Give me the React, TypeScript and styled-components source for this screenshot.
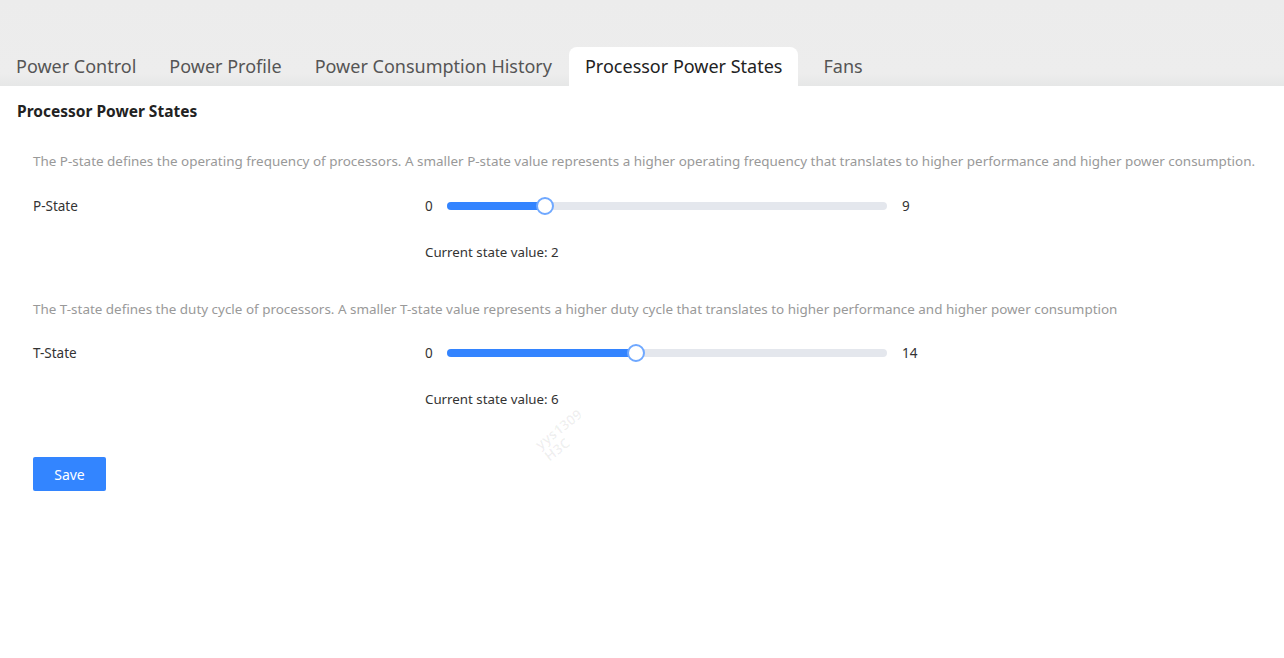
import styled, { createGlobalStyle } from 'styled-components';

const GlobalStyle = createGlobalStyle`
  html, body {
    margin: 0;
    padding: 0;
    background: #fff;
    font-family: "Noto Sans", "Liberation Sans", sans-serif;
  }
`;

const Page = styled.div`
  position: relative;
  width: 1284px;
  min-height: 658px;
  background: #fff;
`;

const TabBar = styled.div`
  height: 86px;
  display: flex;
  align-items: flex-end;
  background: linear-gradient(to bottom, #ececec 0%, #ededed 85%, #e6e7e7 100%);
`;

const Tab = styled.div<{ $active?: boolean }>`
  height: 39px;
  padding: 0 16px 1px 16px;
  display: flex;
  align-items: center;
  box-sizing: border-box;
  font-size: 18px;
  color: ${(p) => (p.$active ? '#222' : '#555')};
  background: ${(p) => (p.$active ? '#fff' : 'transparent')};
  border-radius: 8px 8px 0 0;
  margin-right: ${(p) => (p.$active ? '9px' : '1px')};
`;

const Content = styled.div`
  padding: 13px 0 0 17px;
`;

const Title = styled.h2`
  margin: 0;
  font-size: 15.5px;
  font-weight: 700;
  color: #222;
  line-height: 24px;
`;

const Section = styled.div`
  padding-left: 16px;
`;

const Description = styled.p<{ $top: number }>`
  margin: ${(p) => p.$top}px 0 0;
  font-size: 13.45px;
  color: #999;
  line-height: 20px;
  white-space: nowrap;
`;

const Row = styled.div<{ $top: number }>`
  display: flex;
  align-items: center;
  height: 20px;
  margin-top: ${(p) => p.$top}px;
  font-size: 13.5px;
  color: #333;
`;

const Label = styled.div`
  width: 392px;
`;

const SliderWrap = styled.div`
  display: flex;
  align-items: center;
`;

const Bound = styled.span<{ $side: 'min' | 'max' }>`
  width: ${(p) => (p.$side === 'min' ? '22px' : 'auto')};
  margin-left: ${(p) => (p.$side === 'max' ? '15px' : '0')};
`;

const Track = styled.div`
  position: relative;
  width: 440px;
  height: 8px;
  border-radius: 4px;
  background: #e4e7ed;
`;

const Fill = styled.div`
  position: absolute;
  left: 0;
  top: 0;
  height: 8px;
  border-radius: 4px;
  background: #3384ff;
`;

const Handle = styled.div`
  position: absolute;
  top: 50%;
  width: 14px;
  height: 14px;
  border: 2px solid #6fa8ff;
  border-radius: 50%;
  background: #fff;
  transform: translate(-50%, -50%);
`;

const Current = styled.div`
  margin: 26px 0 0 392px;
  font-size: 13.3px;
  color: #333;
  line-height: 20px;
`;

const SaveButton = styled.button`
  margin-top: 48px;
  width: 73px;
  height: 34px;
  border: none;
  border-radius: 2px;
  background: #3385ff;
  color: #fff;
  font-family: inherit;
  font-size: 14px;
  cursor: pointer;
`;

const Watermark = styled.div`
  position: absolute;
  left: 532px;
  top: 440px;
  transform: rotate(-38deg);
  transform-origin: left top;
  font-size: 14px;
  font-weight: 700;
  line-height: 15px;
  color: rgba(0, 0, 0, 0.06);
  pointer-events: none;
`;

const tabs = ['Power Control', 'Power Profile', 'Power Consumption History', 'Processor Power States', 'Fans'];

type StateSliderProps = { label: string; max: number; value: number; top: number };

const StateSlider = ({ label, max, value, top }: StateSliderProps) => {
  const pct = (value / max) * 100;
  return (
    <>
      <Row $top={top}>
        <Label>{label}</Label>
        <SliderWrap>
          <Bound $side="min">0</Bound>
          <Track>
            <Fill style={{ width: `${pct}%` }} />
            <Handle style={{ left: `${pct}%` }} />
          </Track>
          <Bound $side="max">{max}</Bound>
        </SliderWrap>
      </Row>
      <Current>Current state value: {value}</Current>
    </>
  );
};

export default function App() {
  return (
    <Page>
      <GlobalStyle />
      <TabBar>
        {tabs.map((t) => (
          <Tab key={t} $active={t === 'Processor Power States'}>
            {t}
          </Tab>
        ))}
      </TabBar>
      <Content>
        <Title>Processor Power States</Title>
        <Section>
          <Description $top={28}>
            The P-state defines the operating frequency of processors. A smaller P-state value represents a higher operating frequency that translates to higher performance and higher power consumption.
          </Description>
          <StateSlider label="P-State" max={9} value={2} top={25} />
          <Description $top={37}>
            The T-state defines the duty cycle of processors. A smaller T-state value represents a higher duty cycle that translates to higher performance and higher power consumption
          </Description>
          <StateSlider label="T-State" max={14} value={6} top={24} />
          <SaveButton>Save</SaveButton>
        </Section>
      </Content>
      <Watermark>
        yys1309
        <br />
        H3C
      </Watermark>
    </Page>
  );
}
